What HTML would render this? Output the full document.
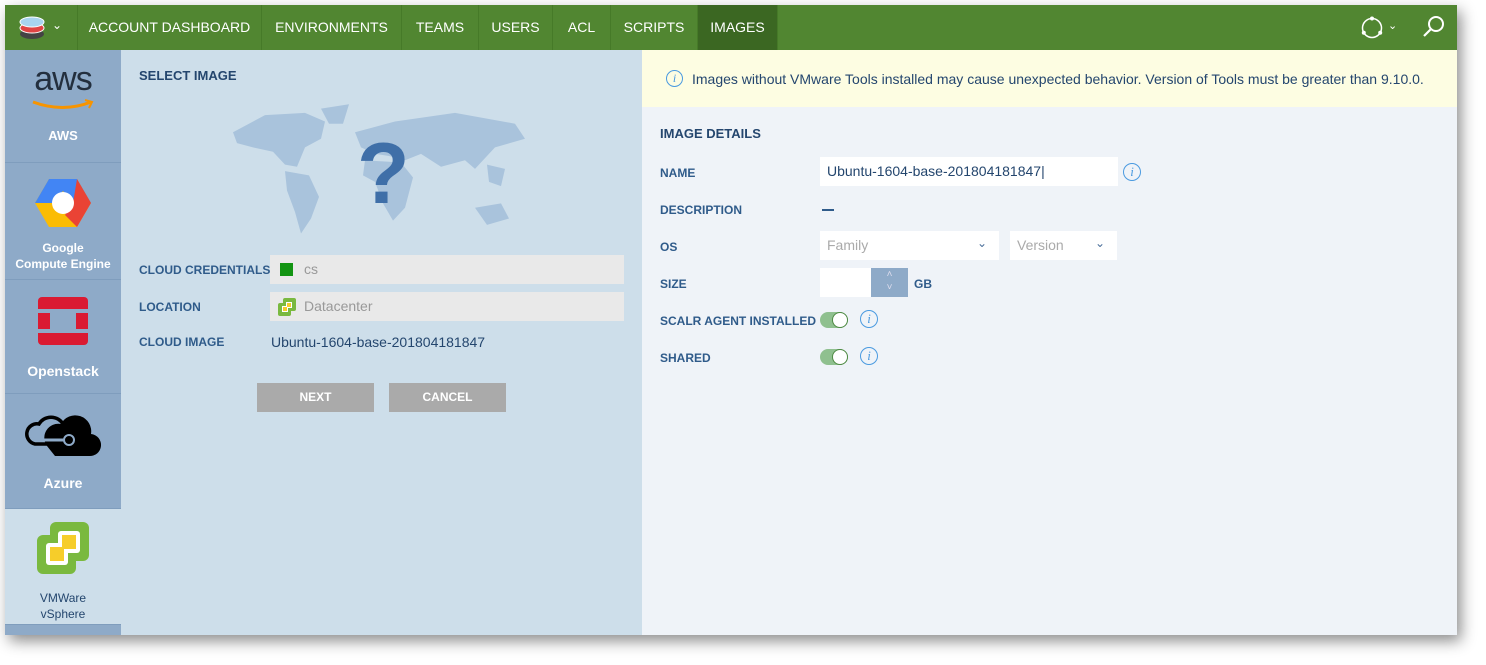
<!DOCTYPE html>
<html><head><meta charset="utf-8"><style>
*{margin:0;padding:0;box-sizing:border-box}
body{width:1486px;height:665px;background:#fff;font-family:"Liberation Sans",sans-serif;position:relative;overflow:hidden}
.win{position:absolute;left:5px;top:5px;width:1452px;height:630px;box-shadow:4px 6px 14px rgba(0,0,0,.45);background:#eff3f8;overflow:hidden}
.nav{position:absolute;left:0;top:0;width:1452px;height:45px;background:#518631}
.nav .it{position:absolute;top:0;height:45px;line-height:45px;color:#fff;font-size:14px;border-left:1px solid #467a28;text-align:center}
.side{position:absolute;left:0;top:45px;width:116px;height:585px;background:#8eaac8}
.si{position:absolute;left:0;width:116px;border-bottom:1px solid #7f9dbd;color:#fff;font-size:13px;font-weight:bold;text-align:center}
.lp{position:absolute;left:116px;top:45px;width:521px;height:585px;background:#cddeea}
.rp{position:absolute;left:637px;top:45px;width:815px;height:585px;background:#eff3f8}
.lbl{position:absolute;font-size:12px;font-weight:bold;color:#2f5b8a}
.fld{position:absolute;background:#fff;font-size:14px;color:#24466e}
.btn{position:absolute;background:#aaa;color:#fff;font-weight:bold;font-size:12px;text-align:center;line-height:29px;height:29px}
.info{position:absolute;width:18px;height:18px;border:1.5px solid #4a9ae0;border-radius:50%;color:#4a9ae0;font:italic 13px "Liberation Serif",serif;text-align:center;line-height:16px}
.tg{position:absolute;width:28px;height:16px;border-radius:8px;background:#8fc08f}
.tg::after{content:"";position:absolute;right:0;top:0;width:16px;height:16px;border-radius:50%;background:#fff;border:1.5px solid #4f8a44;box-sizing:border-box}
</style></head><body>
<div class="win">
 <div class="nav">
  <svg style="position:absolute;left:13px;top:9px" width="28" height="28" viewBox="0 0 28 28"><ellipse cx="14" cy="20" rx="12" ry="5" fill="#444"/><ellipse cx="14" cy="14" rx="12" ry="5" fill="#e04444" stroke="#fff"/><ellipse cx="14" cy="8" rx="12" ry="5" fill="#a8d4f0" stroke="#fff"/></svg>
  <div style="position:absolute;left:47px;top:13px;color:#fff;font-size:12px">⌄</div>
  <div class="it" style="left:72px;width:184px">ACCOUNT DASHBOARD</div>
  <div class="it" style="left:256px;width:140px">ENVIRONMENTS</div>
  <div class="it" style="left:396px;width:77px">TEAMS</div>
  <div class="it" style="left:473px;width:74px">USERS</div>
  <div class="it" style="left:547px;width:58px">ACL</div>
  <div class="it" style="left:605px;width:87px">SCRIPTS</div>
  <div class="it" style="left:692px;width:81px;background:#3b6722;border-right:1px solid #467a28">IMAGES</div>
  <svg style="position:absolute;left:1355px;top:11px" width="24" height="24"><circle cx="12" cy="12" r="9.5" fill="none" stroke="#fff" stroke-width="1.5"/><circle cx="12" cy="2.5" r="2" fill="#fff"/><circle cx="3.8" cy="16.7" r="2" fill="#fff"/><circle cx="20.2" cy="16.7" r="2" fill="#fff"/></svg>
  <div style="position:absolute;left:1383px;top:14px;color:#fff;font-size:11px">⌄</div>
  <svg style="position:absolute;left:1417px;top:10px" width="24" height="24"><circle cx="14" cy="9" r="7" fill="none" stroke="#fff" stroke-width="2"/><line x1="9" y1="14" x2="2" y2="21" stroke="#fff" stroke-width="2.2"/></svg>
 </div>
 <div class="side">
  <div class="si" style="top:0;height:113px"><div style="font-size:34px;color:#232f3e;font-weight:normal;margin-top:10px;letter-spacing:-1px">aws</div><svg width="64" height="12" style="margin-top:-6px"><path d="M2 3 Q32 14 60 3" stroke="#f79400" stroke-width="3" fill="none"/><path d="M54 1 L61 3 L58 9" stroke="#f79400" stroke-width="2" fill="none"/></svg><div style="margin-top:14px">AWS</div></div>
  <div class="si" style="top:113px;height:117px"><svg width="56" height="52" style="margin-top:14px" viewBox="0 0 56 52"><polygon points="14,2 42,2 56,26 42,50 14,50 0,26" fill="#fbbc04"/><polygon points="14,2 42,2 56,26 38,26 28,14 18,26 0,26" fill="#4285f4"/><polygon points="42,2 56,26 42,50 30,38 38,26" fill="#ea4335"/><circle cx="28" cy="26" r="11" fill="#fff"/></svg><div style="line-height:16px;margin-top:8px;font-size:12px">Google<br>Compute Engine</div></div>
  <div class="si" style="top:230px;height:114px"><svg width="52" height="50" style="margin-top:16px"><rect x="1" y="1" width="50" height="48" rx="4" fill="#da1a32"/><rect x="1" y="13" width="50" height="4" fill="#8eaac8"/><rect x="1" y="33" width="50" height="4" fill="#8eaac8"/><rect x="13" y="13" width="26" height="24" fill="#8eaac8"/></svg><div style="margin-top:14px;font-size:14px">Openstack</div></div>
  <div class="si" style="top:344px;height:115px"><svg width="76" height="48" style="margin-top:16px" viewBox="0 0 76 48"><path d="M30 46 H64 A11 11 0 0 0 66 24 A16 16 0 0 0 36 14 A14 14 0 0 0 22 36 Z" fill="#000"/><path d="M38 14 A14 14 0 0 0 14 14 A10 10 0 0 0 10 34 H40" fill="none" stroke="#000" stroke-width="3.5"/><line x1="10" y1="30" x2="42" y2="30" stroke="#8eaac8" stroke-width="3"/><circle cx="44" cy="30" r="5" fill="#000" stroke="#8eaac8" stroke-width="2"/></svg><div style="margin-top:14px;font-size:14px">Azure</div></div>
  <div class="si" style="top:459px;height:116px;background:#cddeea;color:#24466e;font-weight:normal"><svg width="54" height="54" style="margin-top:12px"><rect x="14" y="1" width="39" height="39" rx="6" fill="#7ab93f"/><rect x="1" y="14" width="39" height="39" rx="6" fill="#7ab93f"/><rect x="10" y="22" width="22" height="22" rx="3" fill="#fff"/><rect x="22" y="10" width="22" height="22" rx="3" fill="#fff"/><rect x="14" y="26" width="14" height="14" fill="#f6cd2a"/><rect x="26" y="14" width="14" height="14" fill="#f6cd2a"/></svg><div style="line-height:16px;margin-top:12px;font-size:12px">VMWare<br>vSphere</div></div>
 </div>
 <div class="lp">
  <div class="lbl" style="left:18px;top:18px;color:#24466e;font-size:13px">SELECT IMAGE</div>
  <svg style="position:absolute;left:104px;top:50px" width="312" height="140" viewBox="0 0 312 130" preserveAspectRatio="none" fill="#a9c3dc"><path d="M8 30 L40 14 L80 12 L100 20 L96 36 L80 44 L72 62 L60 60 L48 48 L28 44 L12 40Z"/><path d="M60 66 L84 70 L94 90 L86 110 L76 124 L70 104 L62 84Z"/><path d="M96 8 L124 4 L118 22 L104 22Z"/><path d="M130 30 L170 20 L230 12 L290 22 L300 36 L270 44 L250 64 L240 56 L216 62 L196 50 L180 56 L164 52 L150 50 L136 44Z"/><path d="M140 56 L176 58 L188 72 L180 100 L168 112 L158 96 L150 76 L138 70Z"/><path d="M250 100 L276 96 L284 110 L262 116Z"/><path d="M262 60 L280 64 L276 80 L264 76Z"/></svg>
  <div style="position:absolute;left:236px;top:75px;font:bold 86px 'Liberation Sans',sans-serif;color:#3f6fa8">?</div>
  <div class="lbl" style="left:18px;top:213px">CLOUD CREDENTIALS</div>
  <div class="fld" style="left:149px;top:205px;width:354px;height:29px;background:#e9e9e9;color:#999;padding:6px 0 0 34px">cs<div style="position:absolute;left:10px;top:8px;width:13px;height:13px;background:#129412"></div></div>
  <div class="lbl" style="left:18px;top:250px">LOCATION</div>
  <div class="fld" style="left:149px;top:242px;width:354px;height:29px;background:#e9e9e9;color:#999;padding:6px 0 0 34px">Datacenter<svg style="position:absolute;left:8px;top:6px" width="18" height="18"><rect x="5" y="0" width="13" height="13" rx="2" fill="#7ab93f"/><rect x="0" y="5" width="13" height="13" rx="2" fill="#7ab93f"/><rect x="4" y="8" width="6" height="6" fill="#fff"/><rect x="8" y="4" width="6" height="6" fill="#fff"/><rect x="5" y="9" width="4" height="4" fill="#f6cd2a"/><rect x="9" y="5" width="4" height="4" fill="#f6cd2a"/></svg></div>
  <div class="lbl" style="left:18px;top:285px">CLOUD IMAGE</div>
  <div style="position:absolute;left:150px;top:284px;font-size:14px;color:#24466e">Ubuntu-1604-base-201804181847</div>
  <div class="btn" style="left:136px;top:333px;width:117px">NEXT</div>
  <div class="btn" style="left:268px;top:333px;width:117px">CANCEL</div>
 </div>
 <div class="rp">
  <div style="position:absolute;left:0;top:0;width:815px;height:57px;background:#fdfde2"></div>
  <div class="info" style="left:24px;top:20px;width:17px;height:17px;font-size:12px;line-height:14px">i</div>
  <div style="position:absolute;left:50px;top:21px;font-size:14px;color:#24466e">Images without VMware Tools installed may cause unexpected behavior. Version of Tools must be greater than 9.10.0.</div>
  <div class="lbl" style="left:18px;top:76px;color:#24466e;font-size:13px">IMAGE DETAILS</div>
  <div class="lbl" style="left:18px;top:116px">NAME</div>
  <div class="fld" style="left:178px;top:107px;width:298px;height:29px;padding:6px 0 0 7px">Ubuntu-1604-base-201804181847|</div>
  <div class="info" style="left:481px;top:113px">i</div>
  <div class="lbl" style="left:18px;top:153px">DESCRIPTION</div>
  <div style="position:absolute;left:180px;top:159px;width:12px;height:2px;background:#2f5b8a"></div>
  <div class="lbl" style="left:18px;top:190px">OS</div>
  <div class="fld" style="left:178px;top:181px;width:179px;height:29px;padding:6px 0 0 7px;color:#aaa">Family<span style="position:absolute;right:12px;top:5px;color:#4a6f9a;font-size:12px">⌄</span></div>
  <div class="fld" style="left:368px;top:181px;width:107px;height:29px;padding:6px 0 0 7px;color:#aaa">Version<span style="position:absolute;right:12px;top:5px;color:#4a6f9a;font-size:12px">⌄</span></div>
  <div class="lbl" style="left:18px;top:227px">SIZE</div>
  <div class="fld" style="left:178px;top:218px;width:88px;height:29px"><div style="position:absolute;left:51px;top:0;width:37px;height:29px;background:#8eaac8;color:#dde;font-size:10px;text-align:center;line-height:13px">˄<br>˅</div></div>
  <div class="lbl" style="left:272px;top:227px">GB</div>
  <div class="lbl" style="left:18px;top:264px">SCALR AGENT INSTALLED</div>
  <div class="tg" style="left:178px;top:262px"></div>
  <div class="info" style="left:218px;top:260px">i</div>
  <div class="lbl" style="left:18px;top:301px">SHARED</div>
  <div class="tg" style="left:178px;top:299px"></div>
  <div class="info" style="left:218px;top:297px">i</div>
 </div>
</div>
</body></html>
